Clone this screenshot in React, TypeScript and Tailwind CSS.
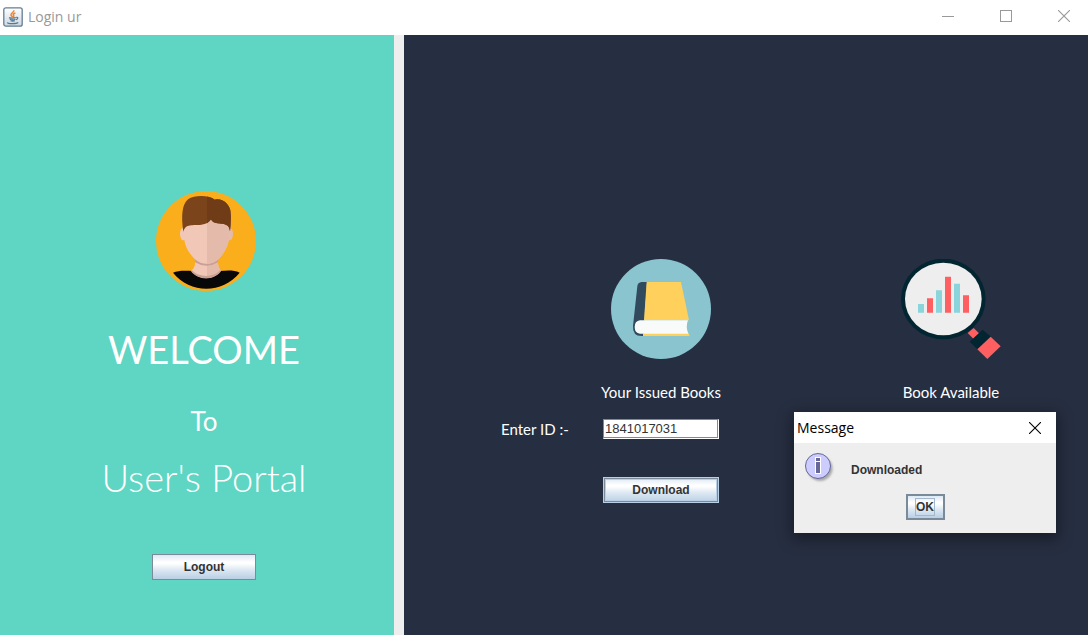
import { useState } from "react";

const metalFill =
  "bg-[linear-gradient(to_bottom,#dde8f3_0%,#ffffff_30%,#ffffff_35%,#dfe9f3_60%,#b8cfe5_100%)] font-['Liberation_Sans',Arial,sans-serif] text-xs font-bold text-[#333333]";

function JavaIcon() {
  return (
    <svg viewBox="0 0 20 20" className="h-5 w-5" aria-hidden="true">
      <defs>
        <linearGradient id="java-tile" x1="0" y1="0" x2="0" y2="1">
          <stop offset="0" stopColor="#ffffff" />
          <stop offset="1" stopColor="#cbd8e2" />
        </linearGradient>
      </defs>
      <rect x="0.8" y="0.8" width="18.4" height="18.4" rx="2" fill="url(#java-tile)" stroke="#667e92" strokeWidth="1.3" />
      <path d="M10.8 3.2c.7 2-3.6 3.1-2.8 5 .3.8 1.2 1.1 1.4 2M12.4 6c-1.7.6-2.8 1.5-1.8 2.5.5.6 0 1.2-.6 1.7" fill="none" stroke="#e98538" strokeWidth="1.5" />
      <path d="M6 10.6c1.5.7 5.6.6 6.8-.1M6.8 12.2c1.5.6 4.4.6 5.6 0M7.5 13.7c1.3.5 3.2.5 4.4 0M13.2 10.4c2.4-.5 1.9 1.9-.3 2.3M4.6 15.4c-.6 1.6 8.9 1.7 10.6.1" fill="none" stroke="#587891" strokeWidth="1.2" />
    </svg>
  );
}

function Avatar() {
  return (
    <svg viewBox="21 18 300 300" className="h-[100px] w-[100px]" role="img" aria-label="User">
      <defs>
        <clipPath id="face-right">
          <rect x="174" y="0" width="160" height="340" />
        </clipPath>
      </defs>
      <circle cx="171" cy="168" r="150" fill="#fbae1c" />
      <path d="M72 263C89 255 111 257 132 258C151 285 193 286 212 258C233 257 253 254 272 263C219 328 123 326 72 263Z" fill="#080808" />
      <path d="M138 210V235Q138 248 127 257C146 286 196 286 215 257Q207 248 207 235V210Z" fill="#f1c8b8" />
      <path d="M138 210V235Q138 248 127 257C146 286 196 286 215 257Q207 248 207 235V210Z" fill="#e4bbab" clipPath="url(#face-right)" />
      <path d="M129 256C149 278 193 279 213 256L216 259C194 288 147 287 126 259Z" fill="#c9a094" />
      <path d="M137 220Q173 250 209 220L207 232Q173 253 138 232Z" fill="#c9a094" />
      <ellipse cx="103" cy="147" rx="10" ry="19" fill="#f1c8b8" />
      <ellipse cx="242" cy="147" rx="10" ry="19" fill="#e4bbab" />
      <path d="M103 112C102 163 106 190 136 221Q173 252 210 221C238 190 243 163 244 112L188 95Z" fill="#f1c8b8" />
      <path d="M103 112C102 163 106 190 136 221Q173 252 210 221C238 190 243 163 244 112L188 95Z" fill="#e4bbab" clipPath="url(#face-right)" />
      <path d="M103 141C96 93 99 58 117 43C137 29 180 30 197 44C219 38 239 55 244 76C247 99 245 120 243 139C241 116 224 117 205 115Q190 113 186 103Q178 117 157 119C133 122 108 114 103 141Z" fill="#7b441a" />
      <path d="M103 141C96 93 99 58 117 43C137 29 180 30 197 44C219 38 239 55 244 76C247 99 245 120 243 139C241 116 224 117 205 115Q190 113 186 103Q178 117 157 119C133 122 108 114 103 141Z" fill="#703b17" clipPath="url(#face-right)" />
    </svg>
  );
}

function BookIcon() {
  return (
    <svg viewBox="18 18 300 300" className="h-[100px] w-[100px]" role="img" aria-label="Issued books">
      <circle cx="168" cy="168" r="150" fill="#8ac4cf" />
      <path d="M126 87H110Q98 88 97 100L84 219Q82 249 110 249H118V202Z" fill="#324a5e" />
      <path d="M125 87H228L252 202H117Z" fill="#ffd05b" />
      <path d="M114 241H251L254 249H114Z" fill="#ffd05b" />
      <path d="M105 202H249Q241 221 250 242H105Q89 240 89 222Q89 204 105 202Z" fill="#f9fbfb" />
    </svg>
  );
}

function ChartLensIcon() {
  return (
    <svg viewBox="15 18 300 300" className="h-[100px] w-[100px]" role="img" aria-label="Available books">
      <ellipse cx="142" cy="138" rx="127" ry="121" fill="#022631" />
      <ellipse cx="142" cy="138" rx="115" ry="109" fill="#eeeeee" />
      <path d="M233 225L249 241L232 257L215 240Z" fill="#ff5f61" />
      <path d="M260 230L285 251L246 290L221 266Z" fill="#022631" />
      <path d="M284 251L314 280L274 318L244 289Z" fill="#ff5f61" />
      <path d="M66 153h18v26H66ZM120 112h18v67h-18ZM174 92h18v87h-18Z" fill="#8ad4dc" />
      <path d="M93 136h18v43H93ZM147 71h18v108h-18ZM201 127h18v52h-18Z" fill="#ff5f61" />
    </svg>
  );
}

function InfoIcon() {
  return (
    <svg viewBox="0 0 32 32" className="h-8 w-8" aria-hidden="true">
      <defs>
        <filter id="info-shadow" x="-20%" y="-20%" width="150%" height="150%">
          <feGaussianBlur stdDeviation="1.3" />
        </filter>
      </defs>
      <circle cx="15" cy="15.5" r="12.5" fill="#a8a8a8" filter="url(#info-shadow)" />
      <circle cx="13" cy="13" r="12.5" fill="#ccccff" stroke="#666699" />
      <path d="M10 4h6v17h-6Z" fill="#ffffff" />
      <path d="M11 5h4v3h-4ZM11 9h4v11h-4Z" fill="#666699" />
    </svg>
  );
}

function CloseIcon() {
  return (
    <svg viewBox="0 0 12 12" className="h-3 w-3" aria-hidden="true">
      <path d="M0 0L12 12M12 0L0 12" stroke="currentColor" strokeWidth="1.1" fill="none" />
    </svg>
  );
}

function MessageDialog({ onClose }: { onClose: () => void }) {
  return (
    <div
      role="dialog"
      aria-label="Message"
      className="absolute top-[412px] right-8 w-[262px] bg-[#eeeeee] pb-[13px] shadow-[0_4px_14px_2px_rgba(0,0,0,0.4)]"
    >
      <div className="flex h-[31px] items-center justify-between bg-white pr-[15px] pl-[3px] text-black">
        <h2 className="font-['Open_Sans',sans-serif] text-sm">Message</h2>
        <button type="button" aria-label="Close message" onClick={onClose}>
          <CloseIcon />
        </button>
      </div>
      <div className="flex items-start gap-[14px] pt-[10px] pl-[11px]">
        <InfoIcon />
        <p className="pt-2 text-xs leading-[18px] font-bold text-[#333333]">Downloaded</p>
      </div>
      <div className="mt-[9px] flex justify-center">
        <button type="button" onClick={onClose} className={`${metalFill} h-[26px] w-[39px] border-2 border-[#7a8a99]`}>
          <span className="inline-block border border-[#a3b8cc] leading-4">OK</span>
        </button>
      </div>
    </div>
  );
}

export default function App() {
  const [id, setId] = useState("1841017031");
  const [open, setOpen] = useState(true);

  return (
    <div className="relative flex min-h-screen flex-col bg-[#eeeeee] font-['Liberation_Sans',Arial,sans-serif]">
      <header className="flex h-[35px] items-start justify-between bg-white text-[#999999]">
        <div className="flex items-center gap-[5px] pt-[5px] pl-[3px]">
          <JavaIcon />
          <h1 className="font-['Open_Sans',sans-serif] text-sm leading-6">Login ur</h1>
        </div>
        <div className="flex items-center gap-[46px] pt-[10px] pr-[18px]">
          <button type="button" aria-label="Minimize" className="h-3 w-3">
            <span className="block h-px bg-[#999999]" />
          </button>
          <button type="button" aria-label="Maximize" className="h-3 w-3 border border-[#999999]" />
          <button type="button" aria-label="Close">
            <CloseIcon />
          </button>
        </div>
      </header>

      <div className="flex grow gap-[10px]">
        <aside className="flex w-[394px] shrink-0 flex-col items-center bg-[#5fd5c3] pt-[156px] pl-[14px] font-['Lato',sans-serif] text-white">
          <div className="pl-1">
            <Avatar />
          </div>
          <p className="mt-[34px] text-[38px] leading-[48px]">WELCOME</p>
          <p className="mt-8 text-[26px] leading-8">To</p>
          <p className="mt-4 text-[38px] leading-[48px] font-light">User's Portal</p>
          <button type="button" className={`${metalFill} mt-[53px] h-[26px] w-[104px] border border-[#7a8a99]`}>
            Logout
          </button>
        </aside>

        <main className="flex grow items-start gap-[182px] bg-[#262e41] pt-[224px] pl-[97px] font-['Lato',sans-serif] text-[15px] leading-5 text-white">
          <form className="grid grid-cols-[102px_116px] items-center" onSubmit={(e) => e.preventDefault()}>
            <div className="col-start-2 flex flex-col items-center">
              <BookIcon />
              <h2 className="mt-[23px] whitespace-nowrap">Your Issued Books</h2>
            </div>
            <label htmlFor="student-id" className="mt-[17px]">
              Enter ID :-
            </label>
            <input
              id="student-id"
              value={id}
              onChange={(e) => setId(e.target.value)}
              className="mt-[17px] h-5 w-full border border-[#7a8a99] border-r-white border-b-white bg-white px-px font-['Liberation_Sans',Arial,sans-serif] text-[13px] text-[#333333] shadow-[inset_-1px_-1px_#7a8a99] outline-none"
            />
            <button
              type="submit"
              onClick={() => setOpen(true)}
              className={`${metalFill} col-start-2 mt-[38px] h-[26px] border border-[#b8cfe5] shadow-[inset_0_0_0_1px_#7a8a99,inset_0_0_0_2px_#b8cfe5]`}
            >
              Download
            </button>
          </form>
          <section className="flex flex-col items-center">
            <ChartLensIcon />
            <h2 className="mt-[23px] whitespace-nowrap">Book Available</h2>
          </section>
        </main>
      </div>

      {open && <MessageDialog onClose={() => setOpen(false)} />}
    </div>
  );
}
